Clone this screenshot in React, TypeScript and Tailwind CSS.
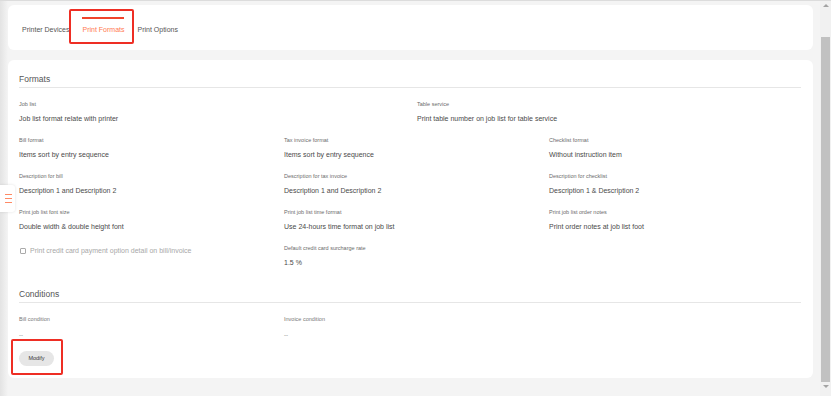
import React from 'react';

const font = { fontFamily: '"Liberation Sans", Arial, sans-serif' };

const Field: React.FC<{ label: string; value: string }> = ({ label, value }) => (
  <div>
    <div className="h-[10px] leading-[10px] text-[5.5px] text-[#6b6b6b] whitespace-nowrap">{label}</div>
    <div className="mt-[5px] h-[10px] leading-[10px] text-[7px] text-[#4a4a4a] whitespace-nowrap">{value}</div>
  </div>
);

const App: React.FC = () => {
  return (
    <div style={font} className="relative w-[831px] h-[396px] flex bg-[#f4f4f4] overflow-hidden border-t border-[#dcdcdc]">
      {/* left shade */}
      <div className="w-[8px] shrink-0 bg-gradient-to-r from-[#e3e3e3] to-[#f4f4f4]" />

      <div className="w-[805px] shrink-0 pt-[4px]">
        {/* tabs card */}
        <div className="h-[45px] bg-white rounded-md pl-[10px] flex items-start gap-[5px]">
          <div className="px-[4px] pt-[20px] text-[7px] leading-[10px] text-[#555]">Printer Devices</div>
          <div className="relative px-[4px] pt-[12px]">
            <div className="h-[2px] bg-[#f0442c]" />
            <div className="mt-[6px] text-[7px] leading-[10px] text-[#ff7a52]">Print Formats</div>
            <div className="absolute left-[-9px] top-[4px] w-[65px] h-[35px] border-2 border-[#ee2e24] rounded-[2px]" />
          </div>
          <div className="px-[4px] pt-[20px] text-[7px] leading-[10px] text-[#555]">Print Options</div>
        </div>

        {/* formats card */}
        <div className="mt-[10px] h-[318px] bg-white rounded-md pl-[11px] pr-[12px]">
          <div className="pt-[14px] pb-[4px] border-b border-[#e6e6e6] h-[28px] leading-[10px] text-[8.5px] text-[#555]">Formats</div>

          <div className="mt-[11px] grid grid-cols-[398px_1fr]">
            <Field label="Job list" value="Job list format relate with printer" />
            <Field label="Table service" value="Print table number on job list for table service" />
          </div>

          <div className="mt-[11px] grid grid-cols-[265px_265px_1fr] gap-y-[11px]">
            <Field label="Bill format" value="Items sort by entry sequence" />
            <Field label="Tax invoice format" value="Items sort by entry sequence" />
            <Field label="Checklist format" value="Without instruction item" />
            <Field label="Description for bill" value="Description 1 and Description 2" />
            <Field label="Description for tax invoice" value="Description 1 and Description 2" />
            <Field label="Description for checklist" value="Description 1 & Description 2" />
            <Field label="Print job list font size" value="Double width & double height font" />
            <Field label="Print job list time format" value="Use 24-hours time format on job list" />
            <Field label="Print job list order notes" value="Print order notes at job list foot" />
            <div className="flex items-center gap-[4px] pt-[3px] self-start">
              <span className="ml-[1px] w-[6px] h-[6px] border border-[#aaa] rounded-[1px] bg-white" />
              <span className="text-[7px] leading-[10px] text-[#a8a8a8] whitespace-nowrap">Print credit card payment option detail on bill/invoice</span>
            </div>
            <Field label="Default credit card surcharge rate" value="1.5 %" />
            <div />
          </div>

          <div className="mt-[20px] pt-[1px] pb-[3px] border-b border-[#e6e6e6] h-[15px] leading-[10px] text-[8.5px] text-[#555]">Conditions</div>

          <div className="mt-[11px] grid grid-cols-[265px_1fr]">
            <div>
              <div className="h-[10px] leading-[10px] text-[5.5px] text-[#777]">Bill condition</div>
              <div className="mt-[6px] h-[10px] leading-[10px] text-[6px] text-[#777]">--</div>
            </div>
            <div>
              <div className="h-[10px] leading-[10px] text-[5.5px] text-[#777]">Invoice condition</div>
              <div className="mt-[6px] h-[10px] leading-[10px] text-[6px] text-[#777]">--</div>
            </div>
          </div>

          <div className="relative mt-[11px] w-[35px] h-[15px]">
            <div className="w-[35px] h-[15px] rounded-full bg-[#e6e6e6] flex items-center justify-center text-[5.5px] text-[#333]">Modify</div>
            <div className="absolute left-[-8px] top-[-12px] w-[52px] h-[36px] border-2 border-[#ee2e24] rounded-[2px]" />
          </div>
        </div>
      </div>

      <div className="w-[7px] shrink-0" />

      {/* scrollbar */}
      <div className="w-[11px] shrink-0 bg-[#f1f1f1] flex flex-col items-center">
        <div className="mt-[3px] w-0 h-0 border-l-[3px] border-r-[3px] border-b-[3px] border-l-transparent border-r-transparent border-b-[#a3a3a3]" />
        <div className="mt-[30px] w-[9px] h-[345px] bg-[#c1c1c1]" />
        <div className="mt-[3px] w-0 h-0 border-l-[3px] border-r-[3px] border-t-[3px] border-l-transparent border-r-transparent border-t-[#a3a3a3]" />
      </div>

      {/* side menu handle */}
      <div className="absolute left-0 top-[184px] w-[15px] h-[27px] bg-white rounded-r-[3px] shadow-[0_0_3px_rgba(0,0,0,0.12)] flex flex-col justify-center gap-[2.5px] pl-[5px]">
        <span className="w-[7px] h-[1.5px] bg-[#ff8a65]" />
        <span className="w-[7px] h-[1.5px] bg-[#ff8a65]" />
        <span className="w-[7px] h-[1.5px] bg-[#ff8a65]" />
      </div>
    </div>
  );
};

export default App;
